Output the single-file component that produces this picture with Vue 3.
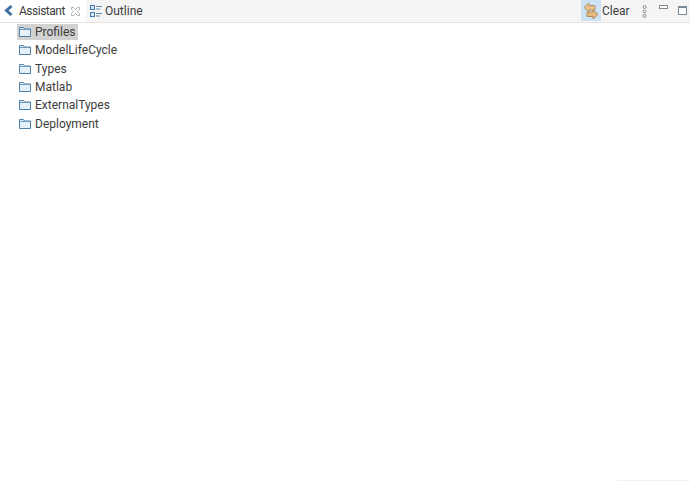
<script setup>
const items = ['Profiles', 'ModelLifeCycle', 'Types', 'Matlab', 'ExternalTypes', 'Deployment']
</script>

<template>
  <div class="view">
    <header class="bar">
      <div class="tab active">
        <svg class="chev" width="12" height="14" viewBox="0 0 12 14"><path d="M8.500 2 3.500 6.500l5 4.500" fill="none" stroke="#3f6f9f" stroke-width="3"/></svg>
        <span class="label assistant">Assistant</span>
        <svg class="close" width="9" height="9" viewBox="0 0 9 9"><path d="M.5.5h2l2 2 2-2h2v2l-2 2 2 2v2h-2l-2-2-2 2h-2v-2l2-2-2-2z" fill="none" stroke="#b0b0b0" stroke-width="1"/></svg>
      </div>
      <div class="tab other">
        <svg width="12" height="14" viewBox="0 0 12 14"><g fill="#dbe8f3" stroke="#3f78ad"><rect x=".5" y="1.500" width="4" height="4"/><rect x=".5" y="8.500" width="4" height="4"/></g><path d="M6 2.500h6M6 5h4M6 9.500h6M6 12h4" stroke="#5f8db5"/></svg>
        <span class="label">Outline</span>
      </div>
      <div class="tools">
        <button class="toggle">
          <svg width="20" height="21" viewBox="0 0 20 21"><path d="M3 7.500 8 3v2.500h6V10H8v2z" fill="#e8c08c" stroke="#b09468"/><path d="M17 14.500 12 19v-2.500H6V12h6v-2z" fill="#e8b878" stroke="#a98a5e"/></svg>
        </button>
        <span class="label clear">Clear</span>
        <svg class="menu" width="5" height="13" viewBox="0 0 5 13"><g fill="#f4f4f4" stroke="#8f8f8f"><circle cx="2.500" cy="2" r="1.500"/><circle cx="2.500" cy="6.500" r="1.500"/><circle cx="2.500" cy="11" r="1.500"/></g></svg>
        <svg class="min" width="9" height="4" viewBox="0 0 9 4"><rect x=".5" y=".5" width="8" height="3" fill="#fff" stroke="#7b8a94"/></svg>
        <svg class="max" width="9" height="9" viewBox="0 0 9 9"><rect x=".5" y=".5" width="8" height="8" fill="#fff" stroke="#7b8a94"/><path d="M0 1.500h9" stroke="#7b8a94"/></svg>
      </div>
    </header>
    <ul class="tree">
      <li v-for="(item, i) in items" :key="item" class="row">
        <svg width="12" height="10" viewBox="0 0 12 10"><path d="M.5 9.500v-9h4l1 1.500h6v7.500z" fill="#e6f0f8" stroke="#4f81a8"/><path d="M1 2.500h10" stroke="#6d9cc0"/></svg>
        <span class="name" :class="{ selected: i === 0 }">{{ item }}</span>
      </li>
    </ul>
    <div class="edge"></div>
  </div>
</template>

<style>
html, body { margin: 0; background: #fff; }
</style>

<style scoped>
.view { position: relative; width: 690px; height: 482px; overflow: hidden; background: #fff; font: 12px/16px Roboto, sans-serif; color: #3c3c3c; }
.bar { display: flex; align-items: stretch; height: 22px; background: #f5f5f5; border-bottom: 1px solid #e4e4e4; }
.tab { display: flex; align-items: center; }
.active { width: 86px; background: #fff; box-sizing: border-box; padding-left: 3px; }
.chev { margin-right: 4px; }
.assistant { letter-spacing: -0.5px; }
.close { margin-left: 6px; }
.other { gap: 3px; padding-left: 4px; }
.tools { display: flex; align-items: center; margin-left: auto; }
.toggle { display: flex; align-items: center; justify-content: center; width: 20px; height: 21px; margin-bottom: 1px; padding: 0; border: 0; background: #cde3f5; }
.clear { margin-left: 1px; width: 27px; }
.menu { margin-left: 13px; }
.min { margin-left: 12px; margin-bottom: 8px; }
.max { margin-left: 10px; margin-bottom: 2px; margin-right: 3px; }
.tree { margin: 0; padding: 0 0 0 19px; list-style: none; }
.row { display: flex; align-items: center; height: 18.300px; }
.row svg { position: relative; z-index: 1; margin-right: 4px; }
.name { padding: 0 2px 0 0; }
.selected { box-shadow: -18px 0 0 #d2d2d2; background: #d2d2d2; }
.edge { position: absolute; right: 0; bottom: 1px; width: 73px; height: 1px; background: #f1f1f1; }
</style>
